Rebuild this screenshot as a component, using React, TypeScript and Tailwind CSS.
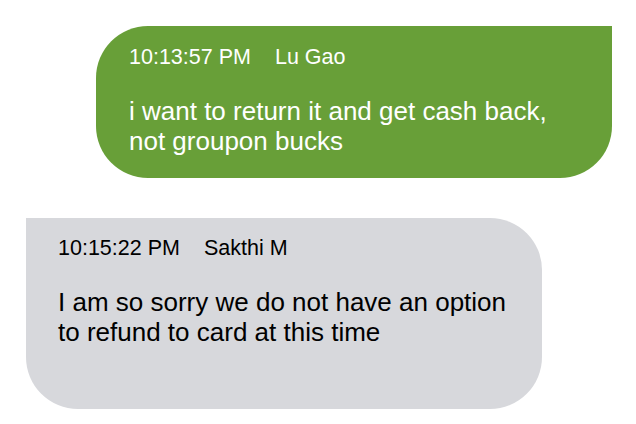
type Message = {
  time: string;
  author: string;
  body: string;
  mine: boolean;
};

const MESSAGES: Message[] = [
  {
    time: "10:13:57 PM",
    author: "Lu Gao",
    body: "i want to return it and get cash back, not groupon bucks",
    mine: true,
  },
  {
    time: "10:15:22 PM",
    author: "Sakthi M",
    body: "I am so sorry we do not have an option to refund to card at this time",
    mine: false,
  },
];

function Bubble({ msg }: { msg: Message }) {
  return (
    <div
      className={
        msg.mine
          ? "w-[516px] self-end rounded-[52px] rounded-tr-none bg-[#689f38] pt-[19px] pb-[22px] pl-[33px] pr-[30px] text-white"
          : "w-[516px] self-start rounded-[52px] rounded-tl-none bg-[#d7d8dc] pt-[18px] pb-[62px] pl-[32px] pr-[30px] text-black"
      }
    >
      <div className="flex gap-[24px] text-[21.5px] leading-[24px]">
        <span>{msg.time}</span>
        <span>{msg.author}</span>
      </div>
      <p className="mt-[27px] text-[26px] leading-[30px]">{msg.body}</p>
    </div>
  );
}

export default function App() {
  return (
    <div
      className="flex min-h-[424px] w-[636px] flex-col gap-[40px] bg-white pt-[26px] pl-[26px] pr-[24px]"
      style={{ fontFamily: '"Liberation Sans", Arial, sans-serif' }}
    >
      {MESSAGES.map((m) => (
        <Bubble key={m.time} msg={m} />
      ))}
    </div>
  );
}
